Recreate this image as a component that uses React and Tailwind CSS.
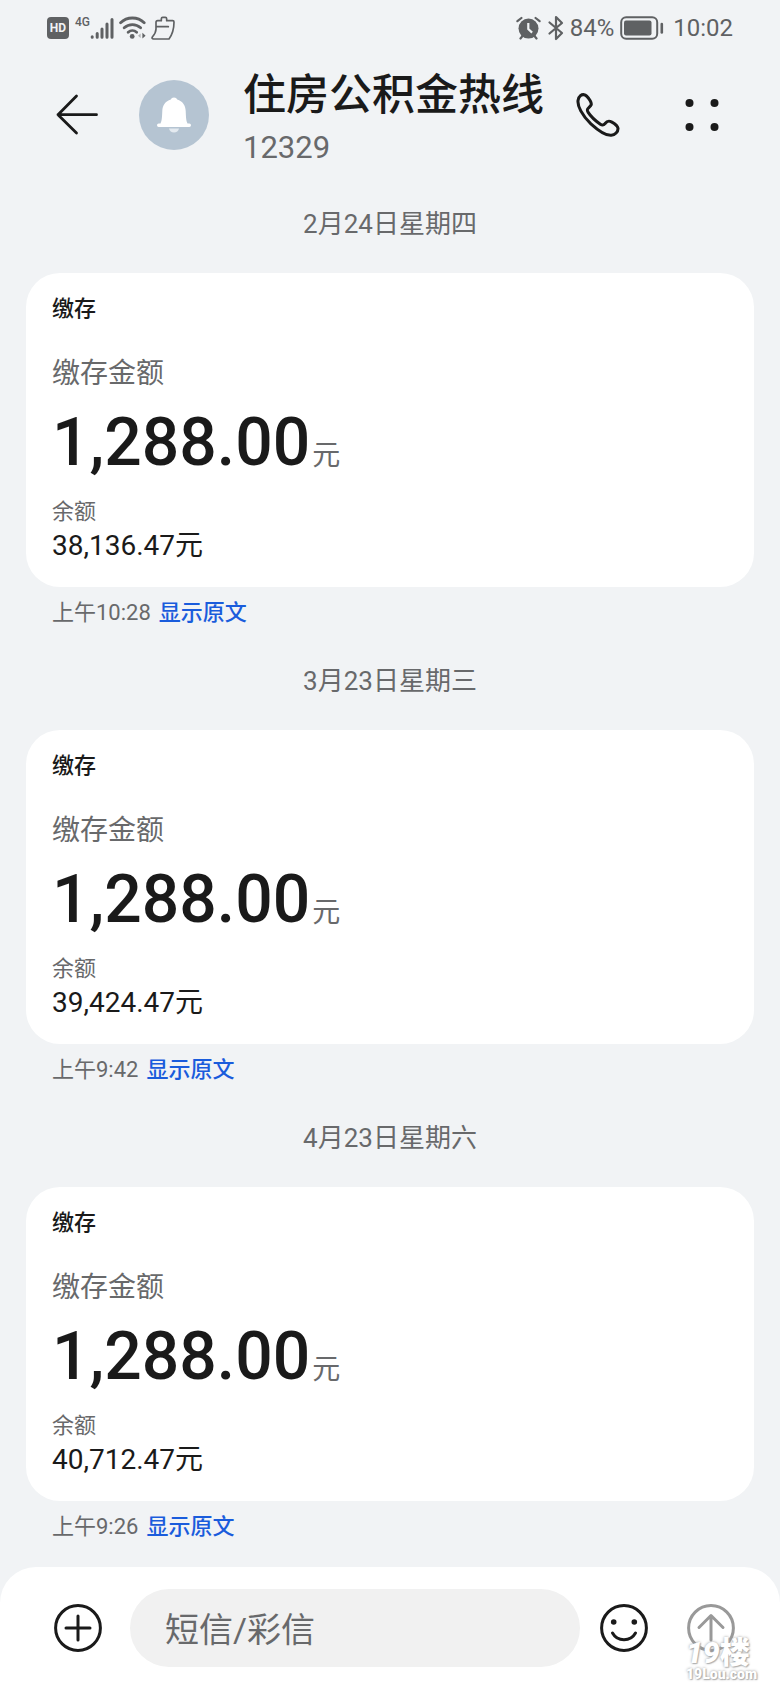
const conversation = [
  { id: 1, date: '2月24日星期四', amount: '1,288.00', balance: '38,136.47', time: '上午10:28' },
  { id: 2, date: '3月23日星期三', amount: '1,288.00', balance: '39,424.47', time: '上午9:42' },
  { id: 3, date: '4月23日星期六', amount: '1,288.00', balance: '40,712.47', time: '上午9:26' },
];

function StatusBar() {
  return (
    <div className="flex h-[54px] items-center justify-between px-[47px] pt-[2px] text-[#5f6163]">
      <div className="flex items-center">
        <span className="flex h-[22px] w-[22px] items-center justify-center rounded-[4px] bg-[#5f6163] text-[12px] font-bold leading-none text-[#f1f3f5]">
          HD
        </span>
        <span className="ml-[6px] mb-3 text-[12px] font-medium leading-none">4G</span>
        <svg className="h-[24px] w-[24px]" viewBox="0 0 24 24" stroke="currentColor" strokeWidth="3" strokeLinecap="round">
          <path d="M2.2 20.8v.4M7.2 17.6v3.6M12 13v8.2M17 8v13.2M22 3.6v17.6" />
        </svg>
        <svg className="ml-[5px] h-[24px] w-[27px]" viewBox="0 0 27 24" fill="none" stroke="currentColor" strokeWidth="2.8" strokeLinecap="round">
          <path d="M1.6 6.8C8 .4 18.8 .4 25.2 6.8M5.2 11.8C9.8 7.6 17 7.6 21.6 11.8M9.2 16.2C11.6 14 15.2 14 17.6 16.2" />
          <circle cx="13.2" cy="20.4" r="2.4" fill="currentColor" stroke="none" />
          <path d="M21.6 17.4v4.6l-2.6-2.3z" fill="#b0b2b4" stroke="none" />
          <path d="M23.4 16.8v5.8l3.2-2.9z" fill="currentColor" stroke="none" />
        </svg>
        <svg className="ml-[5px] h-[24px] w-[24px]" viewBox="0 0 72 72" fill="none" stroke="currentColor" strokeWidth="5" strokeLinejoin="round" strokeLinecap="round">
          <path d="M20 14h11V8q0-4 4-4h8q4 0 4 4v6h18q4 0 4 4c0 18-4 36-15 51H8q-7-1-4-6c7-8 11-14 11-24V19q0-5 5-5zM16 32h36" />
        </svg>
      </div>
      <div className="flex items-center text-[24px] leading-none">
        <svg className="h-[24px] w-[25px]" viewBox="0 0 25 24">
          <circle cx="12.5" cy="12.6" r="10" fill="currentColor" />
          <path d="M6.5 20l-2 2.5M18.5 20l2 2.5M1.4 5.2l4-3.2M23.6 5.2l-4-3.2" stroke="currentColor" strokeWidth="2.2" strokeLinecap="round" />
          <path d="M12.3 7v6l3.8 3.6" stroke="#f1f3f5" strokeWidth="2.2" fill="none" />
        </svg>
        <svg className="ml-[6px] h-[26px] w-[18px]" viewBox="0 0 18 26" fill="none" stroke="currentColor" strokeWidth="2.2" strokeLinejoin="round" strokeLinecap="round">
          <path d="M2.5 7.5L15 18l-6 6V2l6 6L2.5 18.5" />
        </svg>
        <span className="ml-[5px]">84%</span>
        <svg className="ml-[6px] h-[24px] w-[44px]" viewBox="0 0 44 24" fill="none" stroke="currentColor">
          <rect x="1.2" y="1.2" width="36" height="21.6" rx="5" strokeWidth="2" />
          <rect x="4" y="4.5" width="27.5" height="15" rx="2" fill="currentColor" stroke="none" />
          <path d="M41.8 8v8.5" strokeWidth="2.6" strokeLinecap="round" />
        </svg>
        <span className="ml-[9px]">10:02</span>
      </div>
    </div>
  );
}

function Header() {
  return (
    <header className="flex items-center py-2 pl-[56px] pr-[59px] text-[#1a1a1a]">
      <button type="button" aria-label="返回">
        <svg className="h-[42px] w-[42px]" viewBox="0 0 42 42" fill="none" stroke="currentColor" strokeWidth="2.8" strokeLinecap="round" strokeLinejoin="round">
          <path d="M20.500 2L2 20.700l18.500 18.300M2 20.700h38.500" />
        </svg>
      </button>
      <div className="ml-[41px] h-[70px] w-[70px] shrink-0 rounded-full bg-[#b5c4d2]">
        <svg className="h-full w-full" viewBox="0 0 70 70">
          <path d="M35 17.5c-1.7 0-2.6.8-3.2 2-5.3 1.6-8.3 5.6-8.5 11.5-.3 6.500-.4 9.500-1.800 12.500h-1.800a1.700 1.700 0 0 0 0 3.400h30.600a1.700 1.700 0 0 0 0-3.400h-1.800c-1.400-3-1.500-6-1.800-12.500-.2-5.900-3.200-9.900-8.500-11.500-.6-1.200-1.500-2-3.200-2z" fill="#fff" />
          <path d="M30 48.5h10c-.6 2.6-2.4 4-5 4s-4.400-1.400-5-4z" fill="#e4eaf0" />
        </svg>
      </div>
      <div className="ml-[34px] min-w-0 flex-1">
        <h1 className="truncate text-[43px] font-medium leading-[66px]">住房公积金热线</h1>
        <p className="text-[31px] leading-[40px] text-[#68696b]">12329</p>
      </div>
      <button type="button" aria-label="拨打电话">
        <svg className="h-[44px] w-[44px]" viewBox="0 0 130 130" fill="none" stroke="currentColor" strokeWidth="9" strokeLinejoin="round">
          <path d="M6 22C8 9 17 4 24 5c8 1 12 8 18 18 6 11 3 14-4 20-6 5-6 8-2 14 9 14 23 26 36 35 6 4 9 4 14-2 6-8 11-9 20-4 9 5 17 11 18 18 1 11-9 20-20 21-14 1-36-12-60-34C17 65 4 38 6 22z" />
        </svg>
      </button>
      <button type="button" aria-label="更多" className="ml-[63px]">
        <svg className="h-[38px] w-[38px]" viewBox="0 0 38 38" fill="currentColor">
          <circle cx="6.5" cy="7" r="4" />
          <circle cx="31.5" cy="7" r="4" />
          <circle cx="6.5" cy="31" r="4" />
          <circle cx="31.5" cy="31" r="4" />
        </svg>
      </button>
    </header>
  );
}

function Message({ item }) {
  return (
    <section>
      <p className="text-center text-[26px] leading-[36px] text-[#68696b]">{item.date}</p>
      <div className="mt-[31px] rounded-[34px] bg-white px-[26px] pt-[21px] pb-[22px]">
        <h2 className="text-[22px] font-medium leading-[30px] text-[#1a1a1a]">缴存</h2>
        <p className="mt-[30px] text-[28px] leading-[40px] text-[#68696b]">缴存金额</p>
        <p className="mt-[9px] flex items-baseline gap-[2px]">
          <span className="text-[66px] font-medium leading-[80px] text-[#1a1a1a]">{item.amount}</span>
          <span className="text-[28px] leading-[40px] text-[#68696b]">元</span>
        </p>
        <p className="mt-[14px] text-[22px] leading-[30px] text-[#68696b]">余额</p>
        <p className="text-[28px] leading-[38px] text-[#1a1a1a]">{item.balance}元</p>
      </div>
      <div className="mt-[11px] flex gap-2 px-[26px] text-[22px] leading-[30px]">
        <span className="text-[#68696b]">{item.time}</span>
        <button type="button" className="font-medium text-[#1a5cdc]">显示原文</button>
      </div>
    </section>
  );
}

function Composer() {
  return (
    <footer className="sticky bottom-0 flex items-center rounded-t-[36px] bg-white py-[22px] pl-[54px] pr-[45px] text-[#1a1a1a]">
      <button type="button" aria-label="添加">
        <svg className="h-[48px] w-[48px]" viewBox="0 0 48 48" fill="none" stroke="currentColor" strokeWidth="3" strokeLinecap="round">
          <circle cx="24" cy="24" r="22.4" />
          <path d="M24 12v24M12 24h24" />
        </svg>
      </button>
      <input
        type="text"
        aria-label="短信/彩信"
        placeholder="短信/彩信"
        className="ml-7 h-[78px] min-w-0 flex-1 rounded-full bg-[#f1f1f1] px-[35px] pt-[3px] text-[34px] outline-none placeholder:text-[#68696b]"
      />
      <button type="button" aria-label="表情" className="ml-5">
        <svg className="h-[48px] w-[48px]" viewBox="0 0 48 48" fill="none" stroke="currentColor" strokeWidth="3" strokeLinecap="round">
          <circle cx="24" cy="24" r="22.4" />
          <circle cx="13.7" cy="18" r="2.8" fill="currentColor" stroke="none" />
          <circle cx="34.3" cy="18" r="2.8" fill="currentColor" stroke="none" />
          <path d="M12.5 29c5 9 18 9 23 0" />
        </svg>
      </button>
      <div className="relative ml-[39px]">
        <button type="button" aria-label="发送" className="block text-[#999]">
          <svg className="h-[48px] w-[48px]" viewBox="0 0 48 48" fill="none" stroke="currentColor" strokeWidth="3" strokeLinecap="round" strokeLinejoin="round">
            <circle cx="24" cy="24" r="22.4" />
            <path d="M24 36V12M12 23.5L24 11.5l12 12" />
          </svg>
        </button>
        <div className="absolute top-[35px] -left-px text-white [text-shadow:0_0_3px_#999,1px_1px_1px_#bbb]">
          <p className="whitespace-nowrap text-[30px] font-black leading-[28px]">
            <i>19</i>楼
          </p>
          <p className="text-[14px] font-black leading-[14px]">19Lou.com</p>
        </div>
      </div>
    </footer>
  );
}

export default function App() {
  return (
    <div className="flex min-h-screen flex-col bg-[#f1f3f5] font-['Roboto','Noto_Sans_CJK_SC',sans-serif]">
      <StatusBar />
      <Header />
      <main className="flex flex-1 flex-col gap-[35px] px-[26px] pt-[30px] pb-[25px]">
        {conversation.map((item) => (
          <Message key={item.id} item={item} />
        ))}
      </main>
      <Composer />
    </div>
  );
}
